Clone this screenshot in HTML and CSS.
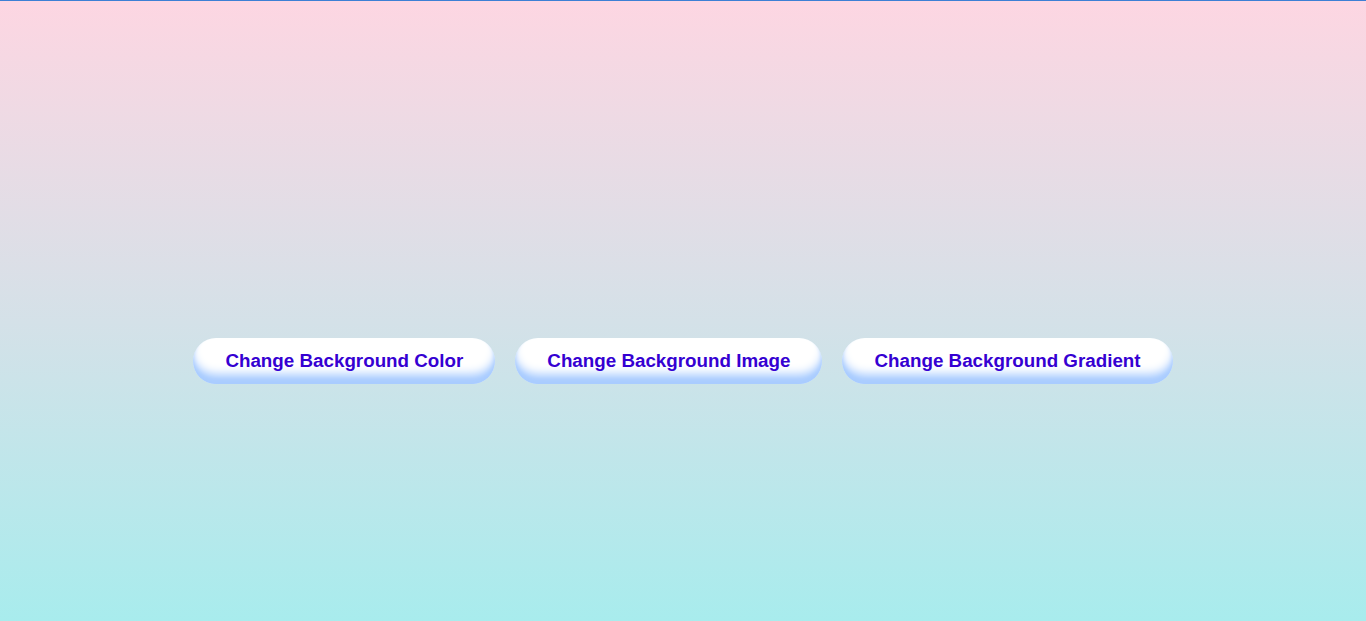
FILE: index.html
```html
<!DOCTYPE html>
<html>
<head>
<meta charset="utf-8">
<link rel="stylesheet" href="styles.css">
</head>
<body>
<main class="page">
  <div class="actions">
    <button class="pill">Change Background Color</button>
    <button class="pill">Change Background Image</button>
    <button class="pill">Change Background Gradient</button>
  </div>
</main>
</body>
</html>
```
FILE: styles.css
```css
html, body {
  margin: 0;
  padding: 0;
  height: 100%;
}
body {
  background: linear-gradient(to bottom, #fdd6e2 0%, #d4e1e8 52%, #a8eced 100%);
  border-top: 1px solid #3d7fd4;
  box-sizing: border-box;
  font-family: "Liberation Sans", Arial, sans-serif;
  overflow: hidden;
}
.page {
  height: 100%;
  box-sizing: border-box;
  padding-top: 337px;
}
.actions {
  display: flex;
  justify-content: center;
  gap: 20px;
}
.pill {
  height: 46px;
  padding: 0 32px;
  border: none;
  border-radius: 23px;
  background: #ffffff;
  box-shadow: inset 0 -12px 10px -2px #a9ccff, inset 0 -4px 4px #b0d0ff;
  color: #3500d2;
  font-family: "Liberation Sans", Arial, sans-serif;
  font-weight: bold;
  font-size: 18.8px;
  cursor: pointer;
}
```
